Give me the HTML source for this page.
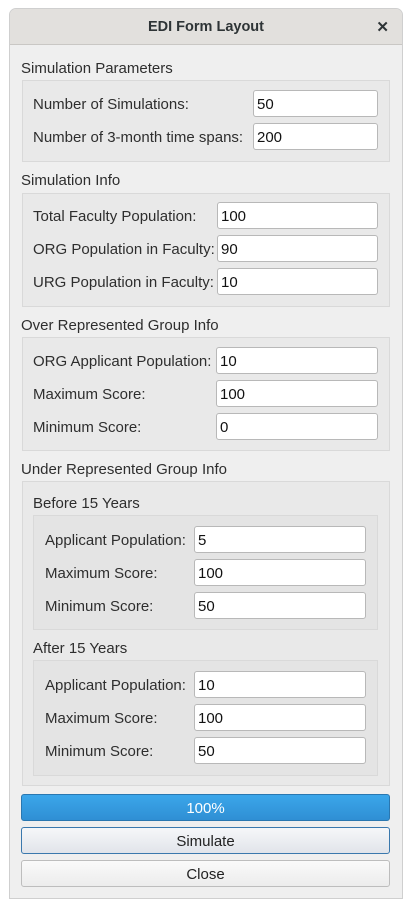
<!DOCTYPE html><html><head><style>
body{margin:0;width:411px;height:908px;background:#fff;font-family:"Liberation Sans",sans-serif;font-size:15px;color:#2e2e2e;position:relative;overflow:hidden}
.win{position:absolute;left:9px;top:8px;width:392px;height:889px;border:1px solid #cfcfcf;border-radius:7px 7px 0 0;background:#efefef;overflow:hidden}
.tb{position:absolute;left:0;top:0;right:0;height:35px;background:#e2e0dd;border-bottom:1px solid #c9c7c4;text-align:center;line-height:37px;font-weight:bold;font-size:14.5px;color:#2e3436}
.x{position:absolute;right:13px;top:0;font-size:15px}
.t{position:absolute;white-space:nowrap;line-height:18px;margin-top:2px}
.g{position:absolute;border:1px solid #d9d9d9;background:#e9e9e9;box-sizing:border-box}
.g2{background:#e4e4e4}
.i{position:absolute;height:27px;box-sizing:border-box;border:1px solid #b8b8b8;border-radius:3px;background:#fff;padding-left:3px;line-height:28px;color:#111}
.b{position:absolute;left:21px;width:369px;height:27px;box-sizing:border-box;border-radius:3px;text-align:center;line-height:28px;color:#222}
</style></head><body>
<div class="win"><div class="tb">EDI Form Layout<span class="x">✕</span></div></div>
<div class="t" style="left:21px;top:58px">Simulation Parameters</div>
<div class="g" style="left:22px;top:80px;width:368px;height:82px"></div>
<div class="t" style="left:33px;top:94px">Number of Simulations:</div>
<div class="i" style="left:253px;top:90px;width:125px">50</div>
<div class="t" style="left:33px;top:127px">Number of 3-month time spans:</div>
<div class="i" style="left:253px;top:123px;width:125px">200</div>

<div class="t" style="left:21px;top:170px">Simulation Info</div>
<div class="g" style="left:22px;top:193px;width:368px;height:114px"></div>
<div class="t" style="left:33px;top:206px">Total Faculty Population:</div>
<div class="i" style="left:217px;top:202px;width:161px">100</div>
<div class="t" style="left:33px;top:239px">ORG Population in Faculty:</div>
<div class="i" style="left:217px;top:235px;width:161px">90</div>
<div class="t" style="left:33px;top:272px">URG Population in Faculty:</div>
<div class="i" style="left:217px;top:268px;width:161px">10</div>

<div class="t" style="left:21px;top:315px">Over Represented Group Info</div>
<div class="g" style="left:22px;top:337px;width:368px;height:114px"></div>
<div class="t" style="left:33px;top:351px">ORG Applicant Population:</div>
<div class="i" style="left:216px;top:347px;width:162px">10</div>
<div class="t" style="left:33px;top:384px">Maximum Score:</div>
<div class="i" style="left:216px;top:380px;width:162px">100</div>
<div class="t" style="left:33px;top:417px">Minimum Score:</div>
<div class="i" style="left:216px;top:413px;width:162px">0</div>

<div class="t" style="left:21px;top:459px">Under Represented Group Info</div>
<div class="g" style="left:22px;top:481px;width:368px;height:305px"></div>
<div class="t" style="left:33px;top:493px">Before 15 Years</div>
<div class="g g2" style="left:33px;top:515px;width:345px;height:115px"></div>
<div class="t" style="left:45px;top:530px">Applicant Population:</div>
<div class="i" style="left:194px;top:526px;width:172px">5</div>
<div class="t" style="left:45px;top:563px">Maximum Score:</div>
<div class="i" style="left:194px;top:559px;width:172px">100</div>
<div class="t" style="left:45px;top:596px">Minimum Score:</div>
<div class="i" style="left:194px;top:592px;width:172px">50</div>
<div class="t" style="left:33px;top:638px">After 15 Years</div>
<div class="g g2" style="left:33px;top:660px;width:345px;height:116px"></div>
<div class="t" style="left:45px;top:675px">Applicant Population:</div>
<div class="i" style="left:194px;top:671px;width:172px">10</div>
<div class="t" style="left:45px;top:708px">Maximum Score:</div>
<div class="i" style="left:194px;top:704px;width:172px">100</div>
<div class="t" style="left:45px;top:741px">Minimum Score:</div>
<div class="i" style="left:194px;top:737px;width:172px">50</div>

<div class="b" style="top:794px;background:linear-gradient(#3ba6ea,#2f8fd4);border:1px solid #2a77b0;color:#fff">100%</div>
<div class="b" style="top:827px;background:linear-gradient(#f6f7f9,#e1e4ea);border:1px solid #3a78ad">Simulate</div>
<div class="b" style="top:860px;background:linear-gradient(#fafafa,#ececec);border:1px solid #bdbdbd">Close</div>
</body></html>
